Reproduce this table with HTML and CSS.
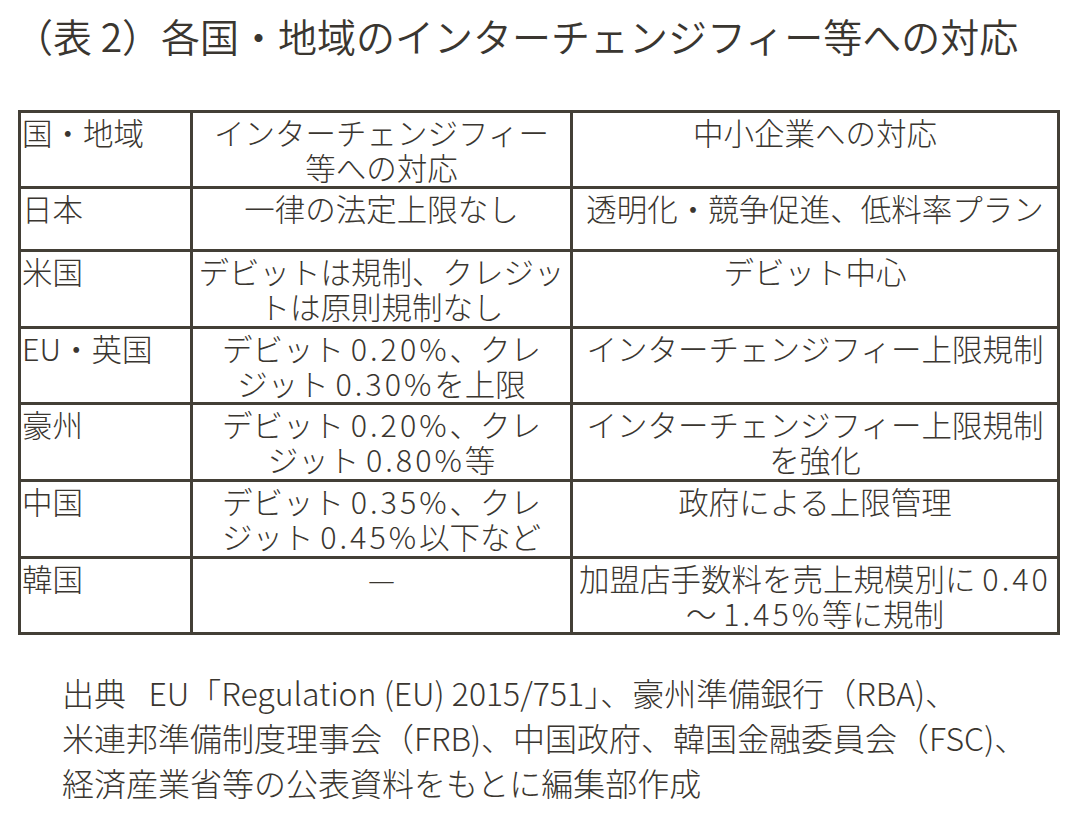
FILE: index.html
```html
<!DOCTYPE html>
<html lang="ja">
<head>
<meta charset="utf-8">
<title>各国・地域のインターチェンジフィー等への対応</title>
<link rel="stylesheet" href="styles.css">
</head>
<body>
<main class="page">
  <h1 class="title">（表 2）各国・地域のインターチェンジフィー等への対応</h1>
  <table class="tbl">
    <colgroup>
      <col class="c-region">
      <col class="c-fee">
      <col class="c-sme">
    </colgroup>
    <tbody>
      <tr class="r-hdr">
        <td class="region">国・地域</td>
        <td class="mid">インターチェンジフィー<br>等への対応</td>
        <td class="mid">中小企業への対応</td>
      </tr>
      <tr class="r-jp">
        <td class="region">日本</td>
        <td class="mid">一律の法定上限なし</td>
        <td class="mid">透明化・競争促進、低料率プラン</td>
      </tr>
      <tr class="r-tall">
        <td class="region">米国</td>
        <td class="mid">デビットは規制、クレジッ<br>トは原則規制なし</td>
        <td class="mid">デビット中心</td>
      </tr>
      <tr class="r-std">
        <td class="region">EU・英国</td>
        <td class="mid">デビット <span class="num">0.20%</span>、クレ<br>ジット <span class="num">0.30%</span>を上限</td>
        <td class="mid">インターチェンジフィー上限規制</td>
      </tr>
      <tr class="r-tall">
        <td class="region">豪州</td>
        <td class="mid">デビット <span class="num">0.20%</span>、クレ<br>ジット <span class="num">0.80%</span>等</td>
        <td class="mid">インターチェンジフィー上限規制<br>を強化</td>
      </tr>
      <tr class="r-tall">
        <td class="region">中国</td>
        <td class="mid">デビット <span class="num">0.35%</span>、クレ<br>ジット <span class="num">0.45%</span>以下など</td>
        <td class="mid">政府による上限管理</td>
      </tr>
      <tr class="r-std">
        <td class="region">韓国</td>
        <td class="mid">—</td>
        <td class="mid">加盟店手数料を売上規模別に <span class="num">0.40</span><br>～ <span class="num">1.45%</span>等に規制</td>
      </tr>
    </tbody>
  </table>
  <p class="source">出典&ensp;&thinsp;EU「Regulation (EU) 2015/751」、豪州準備銀行（RBA)、<br>米連邦準備制度理事会（FRB)、中国政府、韓国金融委員会（FSC)、<br>経済産業省等の公表資料をもとに編集部作成</p>
</main>
</body>
</html>
```

FILE: styles.css
```css
html, body {
  margin: 0;
  padding: 0;
  background: #ffffff;
}

body {
  font-family: "Noto Sans CJK JP", "Noto Sans", sans-serif;
  font-weight: 300;
  color: #3a3630;
}

.page {
  padding-top: 12px;
}

.title {
  margin: 0 0 51px 0;
  padding-left: 14px;
  font-size: 39px;
  line-height: 47px;
  font-weight: 350;
  white-space: nowrap;
}

.tbl {
  margin-left: 18px;
  border-collapse: separate;
  border-spacing: 0;
  table-layout: fixed;
  width: 1042px;
  border-top: 3px solid #433f36;
  border-left: 3px solid #433f36;
  font-size: 30.5px;
  line-height: 35px;
}

.c-region { width: 172px; }
.c-fee { width: 380px; }
.c-sme { width: 487px; }

.tbl td {
  box-sizing: border-box;
  border-right: 3px solid #433f36;
  border-bottom: 3px solid #433f36;
  vertical-align: top;
  padding: 2px 2px 0 2px;
  white-space: nowrap;
}

.tbl td.region {
  text-align: left;
  padding-left: 1px;
}

.tbl td.mid {
  text-align: center;
}

.r-hdr { height: 76px; }
.r-jp { height: 63px; }
.r-tall { height: 77px; }
.r-std { height: 76px; }

.num {
  letter-spacing: 3px;
}

.source {
  margin: 35px 0 0 0;
  padding-left: 62px;
  font-size: 32px;
  line-height: 45px;
  white-space: nowrap;
}
```
